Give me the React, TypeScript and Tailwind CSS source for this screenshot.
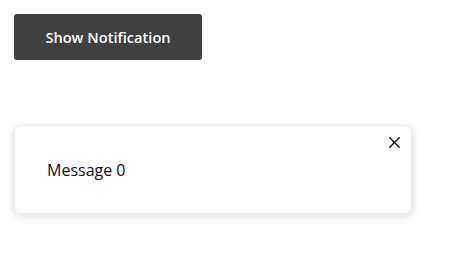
import React from "react";

export default function App() {
  return (
    <div className="w-[450px] h-[253px] bg-white" style={{ fontFamily: '"Open Sans", "Noto Sans", sans-serif' }}>
      <div className="pt-[14px] pl-[14px]">
        <button className="w-[188px] h-[46px] pt-[2px] rounded-[3px] bg-[#404040] text-white text-[14.6px] font-semibold flex items-center justify-center">
          Show Notification
        </button>
      </div>
      <div className="mt-[65px] ml-[14px] w-[398px] h-[89px] rounded-[6px] bg-white border border-[#ececec] shadow-[0_2px_8px_rgba(0,0,0,0.14)] relative flex items-center pl-[32px]">
        <span className="text-[16px] text-[#111]">Message 0</span>
        <button className="absolute top-[10px] right-[10px] w-[13px] h-[13px] flex items-center justify-center text-[#111]">
          <svg width="11" height="11" viewBox="0 0 11 11" fill="none" stroke="currentColor" strokeWidth="1.4" strokeLinecap="round">
            <path d="M0.8 0.8L10.2 10.2M10.2 0.8L0.8 10.2" />
          </svg>
        </button>
      </div>
    </div>
  );
}
